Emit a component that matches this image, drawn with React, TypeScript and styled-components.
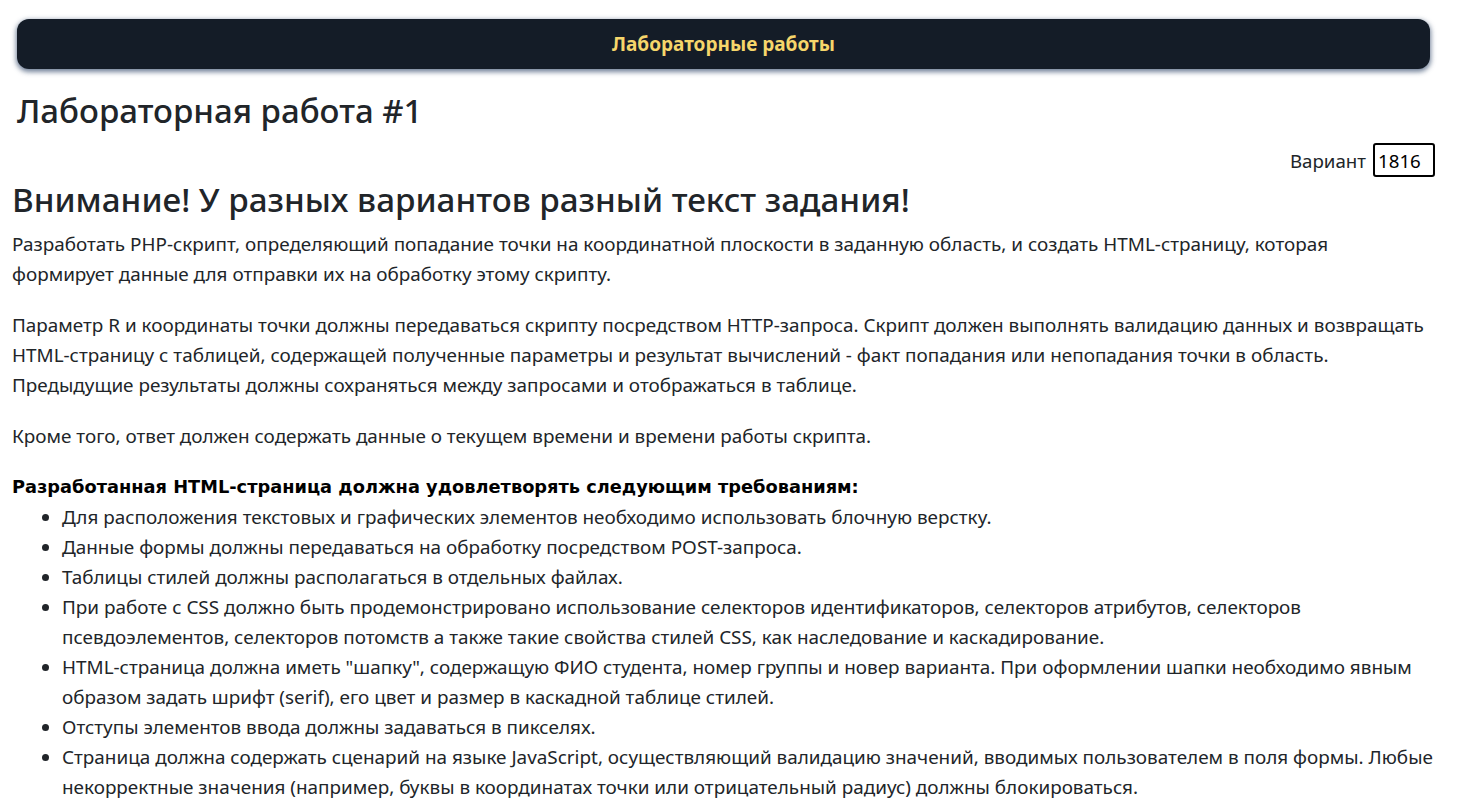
import React, { useEffect, useRef } from "react";
import styled, { createGlobalStyle } from "styled-components";

const GlobalStyle = createGlobalStyle`
  html, body { margin: 0; padding: 0; background: #ffffff; }
  body {
    font-family: "Noto Sans", "Open Sans", sans-serif;
    color: #212529;
  }
`;

const Page = styled.div`
  display: flex;
  flex-direction: column;
  padding-top: 19px;
`;

const TopBar = styled.header`
  margin: 0 35px 0 17px;
  height: 50px;
  border-radius: 12px;
  background: #141c27;
  box-shadow: 0 2px 5px 1px rgba(70, 90, 120, 0.75);
  display: flex;
  align-items: center;
  justify-content: center;
`;

const BarTitle = styled.span`
  color: #f6d66b;
  font-weight: 700;
  font-size: 19px;
`;

const Title = styled.h1`
  margin: 22px 0 0 17px;
  font-size: 33px;
  line-height: 40px;
  font-weight: 500;
`;

const VariantRow = styled.div`
  display: flex;
  justify-content: flex-end;
  align-items: center;
  gap: 7px;
  padding-right: 30px;
  margin-top: 12px;
  font-size: 18.7px;
`;

const VariantInput = styled.input`
  width: 55px;
  height: 30px;
  box-sizing: content-box;
  border: 2px solid #000;
  border-radius: 3px;
  padding: 0 0 0 3px;
  margin: 0;
  font-family: inherit;
  font-size: 18.7px;
  color: #000;
  outline: none;
  caret-color: #000;
`;

const Content = styled.main`
  padding: 0 25px 0 12px;
`;

const Warning = styled.h2`
  margin: 1px 0 7px;
  font-size: 33.2px;
  line-height: 44px;
  font-weight: 500;
`;

const Para = styled.p`
  margin: 0 0 21px;
  font-size: 18.9px;
  line-height: 30px;
`;

const ReqHeading = styled.div`
  font-family: "DejaVu Sans", Verdana, sans-serif;
  font-weight: 700;
  font-size: 17.8px;
  line-height: 30px;
  color: #000;
`;

const List = styled.ul`
  margin: 0;
  padding-left: 50px;
  font-size: 18.9px;
  line-height: 30px;
`;

const Item = styled.li``;

const items = [
  "Для расположения текстовых и графических элементов необходимо использовать блочную верстку.",
  "Данные формы должны передаваться на обработку посредством POST-запроса.",
  "Таблицы стилей должны располагаться в отдельных файлах.",
  "При работе с CSS должно быть продемонстрировано использование селекторов идентификаторов, селекторов атрибутов, селекторов псевдоэлементов, селекторов потомств а также такие свойства стилей CSS, как наследование и каскадирование.",
  "HTML-страница должна иметь \"шапку\", содержащую ФИО студента, номер группы и новер варианта. При оформлении шапки необходимо явным образом задать шрифт (serif), его цвет и размер в каскадной таблице стилей.",
  "Отступы элементов ввода должны задаваться в пикселях.",
  "Страница должна содержать сценарий на языке JavaScript, осуществляющий валидацию значений, вводимых пользователем в поля формы. Любые некорректные значения (например, буквы в координатах точки или отрицательный радиус) должны блокироваться.",
];

export default function App() {
  const inputRef = useRef<HTMLInputElement>(null);
  useEffect(() => {
    const el = inputRef.current;
    if (el) {
      el.focus();
      el.setSelectionRange(el.value.length, el.value.length);
    }
  }, []);

  return (
    <>
      <GlobalStyle />
      <Page>
        <TopBar>
          <BarTitle>Лабораторные работы</BarTitle>
        </TopBar>
        <Title>Лабораторная работа #1</Title>
        <VariantRow>
          <span>Вариант</span>
          <VariantInput ref={inputRef} defaultValue="1816" />
        </VariantRow>
        <Content>
          <Warning>Внимание! У разных вариантов разный текст задания!</Warning>
          <Para>
            Разработать PHP-скрипт, определяющий попадание точки на координатной плоскости в заданную область, и создать HTML-страницу, которая
            <br />
            формирует данные для отправки их на обработку этому скрипту.
          </Para>
          <Para>
            Параметр R и координаты точки должны передаваться скрипту посредством HTTP-запроса. Скрипт должен выполнять валидацию данных и возвращать HTML-страницу с таблицей, содержащей полученные параметры и результат вычислений - факт попадания или непопадания точки в область.
            <br />
            Предыдущие результаты должны сохраняться между запросами и отображаться в таблице.
          </Para>
          <Para>
            Кроме того, ответ должен содержать данные о текущем времени и времени работы скрипта.
          </Para>
          <ReqHeading>Разработанная HTML-страница должна удовлетворять следующим требованиям:</ReqHeading>
          <List>
            {items.map((t) => (
              <Item key={t}>{t}</Item>
            ))}
          </List>
        </Content>
      </Page>
    </>
  );
}
